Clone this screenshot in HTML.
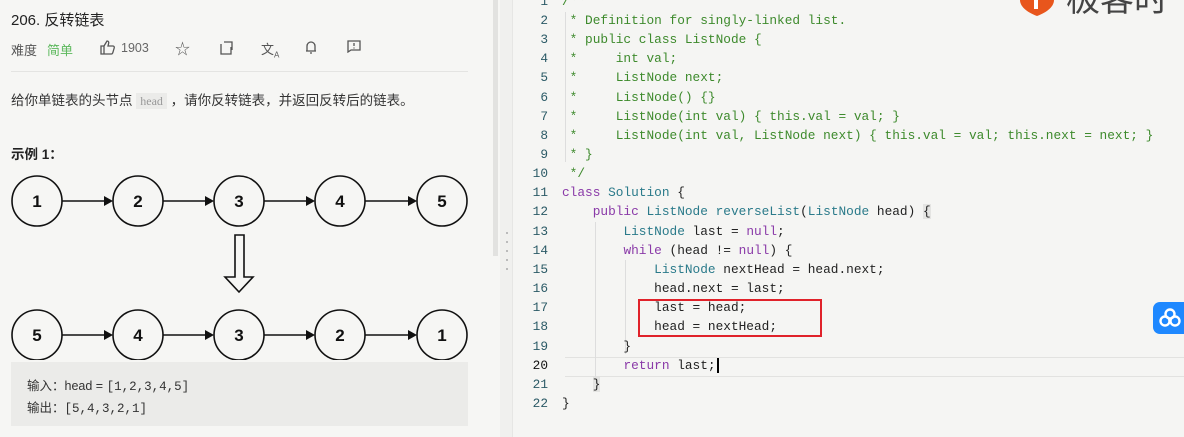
<!DOCTYPE html>
<html><head><meta charset="utf-8"><style>
*{margin:0;padding:0;box-sizing:border-box}
body{width:1184px;height:437px;overflow:hidden;background:#f5f5f3;font-family:"Liberation Sans","Noto Sans CJK SC",sans-serif;position:relative}
.left{position:absolute;left:0;top:0;width:500px;height:437px;background:#f6f6f4}
.abs{position:absolute;white-space:nowrap}
.code{position:absolute;left:0;top:0;font-family:"Liberation Mono",monospace;font-size:12.8px;color:#222}
.ln{position:absolute;width:548px;text-align:right;color:#2b5a66;left:0}
.cl{position:absolute;left:562px;white-space:pre}
.c{color:#3d8a2c}.k{color:#8a3aa8}.t{color:#2a7a8a}
</style></head><body>
<div class="left">
<div class="abs" style="left:11px;top:9px;font-size:15px;color:#222">206. 反转链表</div>
<div class="abs" style="left:11px;top:40px;font-size:13px;color:#555">难度</div>
<div class="abs" style="left:47px;top:40px;font-size:13px;color:#5cb85c">简单</div>
<svg class="abs" style="left:100px;top:40px" width="16" height="15" viewBox="0 0 16 15" fill="none" stroke="#555" stroke-width="1.3"><path d="M1 6h3v8H1zM4 6l3-5c1.5 0 2 1 1.6 2.5L8 6h5c1 0 1.5 1 1.2 2l-1.5 5c-.3.7-.8 1-1.5 1H4"/></svg>
<div class="abs" style="left:121px;top:41px;font-size:12.5px;color:#666">1903</div>
<div class="abs" style="left:175px;top:38px;font-size:15px;color:#555">☆</div>
<svg class="abs" style="left:219px;top:41px" width="14" height="14" fill="none" stroke="#555" stroke-width="1.3"><path d="M2 3v10h10V6M5 1h8v8"/></svg>
<div class="abs" style="left:261px;top:39px;font-size:13px;color:#555">文<sub style="font-size:8px">A</sub></div>
<svg class="abs" style="left:305px;top:40px" width="12" height="15" fill="none" stroke="#555" stroke-width="1.3"><path d="M2 11V6a4 4 0 018 0v5H1h10M5 13h2"/></svg>
<svg class="abs" style="left:347px;top:40px" width="14" height="13" fill="none" stroke="#555" stroke-width="1.3"><path d="M1 1h12v9H4l-3 2z M7 3v3M7 7.5v1"/></svg>
<div class="abs" style="left:11px;top:71px;width:457px;height:1px;background:#e4e4e2"></div>
<div class="abs" style="left:11px;top:89px;font-size:13.5px;color:#333">给你单链表的头节点 <span style="background:#ebebe9;color:#999;font-family:'Liberation Serif',serif;font-size:12px;padding:1px 4px">head</span> ，请你反转链表，并返回反转后的链表。</div>
<div class="abs" style="left:11px;top:143px;font-size:13.5px;font-weight:bold;color:#222">示例 1：</div>
<svg class="abs" style="left:0;top:160px" width="480" height="200" font-family="Liberation Sans" font-weight="bold" font-size="17" text-anchor="middle">
<g fill="none" stroke="#111" stroke-width="1.6">
<circle cx="37" cy="41" r="25"/><circle cx="138" cy="41" r="25"/><circle cx="239" cy="41" r="25"/><circle cx="340" cy="41" r="25"/><circle cx="442" cy="41" r="25"/>
<circle cx="37" cy="175" r="25"/><circle cx="138" cy="175" r="25"/><circle cx="239" cy="175" r="25"/><circle cx="340" cy="175" r="25"/><circle cx="442" cy="175" r="25"/>
<path d="M62 41H106M163 41H207M264 41H308M365 41H410M62 175H106M163 175H207M264 175H308M365 175H410"/>
<path d="M235 75h9v42h9l-14 15l-14-15h10z"/>
</g>
<g fill="#111">
<path d="M104 36L113 41L104 46zM205 36L214 41L205 46zM306 36L315 41L306 46zM408 36L417 41L408 46z"/>
<path d="M104 170L113 175L104 180zM205 170L214 175L205 180zM306 170L315 175L306 180zM408 170L417 175L408 180z"/>
<text x="37" y="47">1</text><text x="138" y="47">2</text><text x="239" y="47">3</text><text x="340" y="47">4</text><text x="442" y="47">5</text>
<text x="37" y="181">5</text><text x="138" y="181">4</text><text x="239" y="181">3</text><text x="340" y="181">2</text><text x="442" y="181">1</text></g>
</svg>
<div class="abs" style="left:11px;top:362px;width:457px;height:64px;background:#ebebe9"></div>
<div class="abs" style="left:27px;top:375px;font-size:12.5px;color:#333">输入：head = <span style="font-family:'Liberation Mono',monospace">[1,2,3,4,5]</span></div>
<div class="abs" style="left:27px;top:397px;font-size:12.5px;color:#333">输出：<span style="font-family:'Liberation Mono',monospace">[5,4,3,2,1]</span></div>
<div class="abs" style="left:493px;top:0;width:5px;height:256px;background:#e2e2e0"></div>
</div>
<div class="abs" style="left:500px;top:0;width:12px;height:437px;background:#f0f0ee"></div>
<div class="abs" style="left:506px;top:232px;width:2px;height:45px;background:repeating-linear-gradient(#bbb 0 2px,transparent 2px 9px)"></div>
<div class="abs" style="left:512px;top:0;width:1px;height:437px;background:#e6e6e4"></div>
<div class="abs" style="left:565px;top:357px;width:619px;height:20px;border-top:1px solid #e2e2e0;border-bottom:1px solid #e2e2e0"></div>
<div class="abs" style="left:565px;top:12px;width:1px;height:150px;background:#ddd"></div>
<div class="abs" style="left:595px;top:222px;width:1px;height:170px;background:#ddd"></div>
<div class="abs" style="left:625px;top:260px;width:1px;height:94px;background:#ddd"></div>
<div class="code">
<div class="ln" style="top:-6px">1</div><div class="cl c" style="top:-6px">/**</div>
<div class="ln" style="top:13px">2</div><div class="cl c" style="top:13px"> * Definition for singly-linked list.</div>
<div class="ln" style="top:32px">3</div><div class="cl c" style="top:32px"> * public class ListNode {</div>
<div class="ln" style="top:51px">4</div><div class="cl c" style="top:51px"> *     int val;</div>
<div class="ln" style="top:70px">5</div><div class="cl c" style="top:70px"> *     ListNode next;</div>
<div class="ln" style="top:90px">6</div><div class="cl c" style="top:90px"> *     ListNode() {}</div>
<div class="ln" style="top:109px">7</div><div class="cl c" style="top:109px"> *     ListNode(int val) { this.val = val; }</div>
<div class="ln" style="top:128px">8</div><div class="cl c" style="top:128px"> *     ListNode(int val, ListNode next) { this.val = val; this.next = next; }</div>
<div class="ln" style="top:147px">9</div><div class="cl c" style="top:147px"> * }</div>
<div class="ln" style="top:166px">10</div><div class="cl c" style="top:166px"> */</div>
<div class="ln" style="top:185px">11</div><div class="cl" style="top:185px"><span class="k">class</span> <span class="t">Solution</span> {</div>
<div class="ln" style="top:204px">12</div><div class="cl" style="top:204px">    <span class="k">public</span> <span class="t">ListNode</span> <span class="t">reverseList</span>(<span class="t">ListNode</span> head) <span style="background:#e4e4e2">{</span></div>
<div class="ln" style="top:224px">13</div><div class="cl" style="top:224px">        <span class="t">ListNode</span> last = <span class="k">null</span>;</div>
<div class="ln" style="top:243px">14</div><div class="cl" style="top:243px">        <span class="k">while</span> (head != <span class="k">null</span>) {</div>
<div class="ln" style="top:262px">15</div><div class="cl" style="top:262px">            <span class="t">ListNode</span> nextHead = head.next;</div>
<div class="ln" style="top:281px">16</div><div class="cl" style="top:281px">            head.next = last;</div>
<div class="ln" style="top:300px">17</div><div class="cl" style="top:300px">            last = head;</div>
<div class="ln" style="top:319px">18</div><div class="cl" style="top:319px">            head = nextHead;</div>
<div class="ln" style="top:339px">19</div><div class="cl" style="top:339px">        }</div>
<div class="ln" style="top:358px;color:#111">20</div><div class="cl" style="top:358px">        <span class="k">return</span> last;<span style="border-left:2px solid #000;margin-left:1px"></span></div>
<div class="ln" style="top:377px">21</div><div class="cl" style="top:377px">    <span style="background:#e4e4e2">}</span></div>
<div class="ln" style="top:396px">22</div><div class="cl" style="top:396px">}</div>
</div>
<div class="abs" style="left:638px;top:299px;width:184px;height:38px;border:2px solid #e0222a"></div>
<svg class="abs" style="left:1018px;top:0" width="40" height="18"><path d="M2 0h34c0 6-6 12-17 16C8 12 2 6 2 0z" fill="#e8561c"/><path d="M16 0v9h4V0z" fill="#fff"/></svg>
<div class="abs" style="left:1066px;top:-28px;font-size:34px;color:#444;font-family:'Noto Sans CJK SC',sans-serif">极客时</div>
<div class="abs" style="left:1153px;top:302px;width:34px;height:32px;background:#1e88ff;border-radius:7px 0 0 7px"></div>
<svg class="abs" style="left:1158px;top:307px" width="24" height="22" fill="none" stroke="#fff" stroke-width="2.4"><circle cx="12" cy="7" r="4.5"/><circle cx="7" cy="14" r="4.5"/><circle cx="17" cy="14" r="4.5"/></svg>
</body></html>
